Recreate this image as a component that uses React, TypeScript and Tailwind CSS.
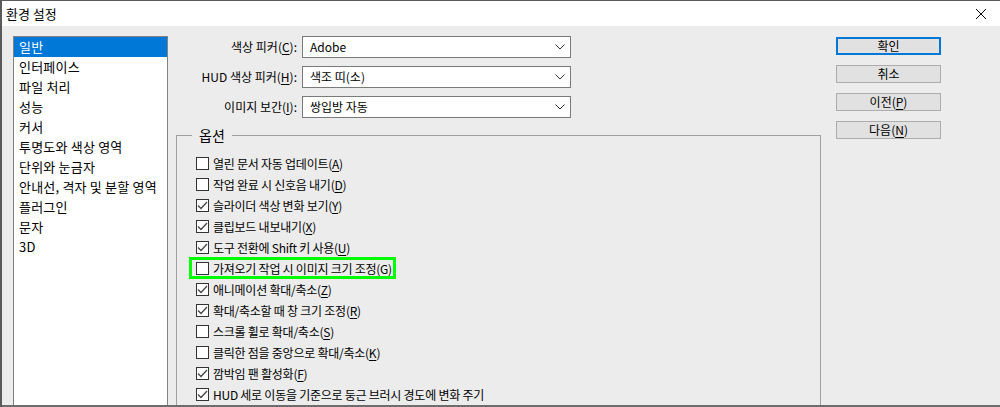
import type { ReactNode } from 'react';

const FONT = "'Noto Sans CJK KR', 'Noto Sans', sans-serif";

const categories = [
  '일반',
  '인터페이스',
  '파일 처리',
  '성능',
  '커서',
  '투명도와 색상 영역',
  '단위와 눈금자',
  '안내선, 격자 및 분할 영역',
  '플러그인',
  '문자',
  '3D',
];

const options: { pre: string; key?: string; post?: string; checked: boolean; highlight?: boolean }[] = [
  { pre: '열린 문서 자동 업데이트(', key: 'A', post: ')', checked: false },
  { pre: '작업 완료 시 신호음 내기(', key: 'D', post: ')', checked: false },
  { pre: '슬라이더 색상 변화 보기(', key: 'Y', post: ')', checked: true },
  { pre: '클립보드 내보내기(', key: 'X', post: ')', checked: true },
  { pre: '도구 전환에 Shift 키 사용(', key: 'U', post: ')', checked: true },
  { pre: '가져오기 작업 시 이미지 크기 조정(', key: 'G', post: ')', checked: false, highlight: true },
  { pre: '애니메이션 확대/축소(', key: 'Z', post: ')', checked: true },
  { pre: '확대/축소할 때 창 크기 조정(', key: 'R', post: ')', checked: true },
  { pre: '스크롤 휠로 확대/축소(', key: 'S', post: ')', checked: false },
  { pre: '클릭한 점을 중앙으로 확대/축소(', key: 'K', post: ')', checked: false },
  { pre: '깜박임 팬 활성화(', key: 'F', post: ')', checked: true },
  { pre: 'HUD 세로 이동을 기준으로 둥근 브러시 경도에 변화 주기', checked: true },
];

function Chevron() {
  return (
    <svg width="10" height="6" viewBox="0 0 10 6" className="shrink-0">
      <polyline points="0.5,0.5 5,5 9.5,0.5" fill="none" stroke="#333" strokeWidth="1" />
    </svg>
  );
}

function Select({ label, k, value }: { label: string; k: string; value: string }) {
  return (
    <div className="flex items-center h-[22px]">
      <div className="w-[126px] text-right text-[12px] pr-[5px] whitespace-nowrap">
        {label}(<u className="underline-offset-2">{k}</u>):
      </div>
      <div className="w-[269px] h-[22px] bg-white border border-[#7a7a7a] flex items-center justify-between pl-[7px] pr-[5px] text-[12px]">
        <span>{value}</span>
        <Chevron />
      </div>
    </div>
  );
}

function Checkbox({ checked }: { checked: boolean }) {
  return (
    <div className="w-[13px] h-[13px] border border-[#333] bg-white shrink-0 flex items-center justify-center">
      {checked && (
        <svg width="11" height="11" viewBox="0 0 11 11">
          <polyline points="1,5.5 4,8.5 10,2" fill="none" stroke="#444" strokeWidth="1.3" />
        </svg>
      )}
    </div>
  );
}

function Button({ children, primary }: { children: ReactNode; primary?: boolean }) {
  return (
    <div
      className={
        primary
          ? 'h-[18px] w-[105px] bg-[#e1e1e1] border-2 border-[#0078d7] flex items-center justify-center text-[12px]'
          : 'h-[18px] w-[105px] bg-[#e1e1e1] border border-[#adadad] flex items-center justify-center text-[12px]'
      }
    >
      {children}
    </div>
  );
}

export default function App() {
  return (
    <div className="w-[1000px] h-[407px] overflow-hidden bg-[#ececec] text-black flex flex-col border-l-2 border-t border-[#5a5a5a]" style={{ fontFamily: FONT }}>
      <div className="h-[25px] bg-white flex items-center justify-between pl-[4px] pr-[13px] shrink-0">
        <span className="text-[13px]">환경 설정</span>
        <svg width="12" height="12" viewBox="0 0 12 12">
          <path d="M1 1 L11 11 M11 1 L1 11" stroke="#000" strokeWidth="1" />
        </svg>
      </div>

      <div className="flex flex-1 pt-[10px] pl-[11px] min-h-0 border-b-2 border-[#6d6d6d]">
        <div className="w-[155px] bg-white border border-[#828282] border-b-0 flex flex-col shrink-0">
          {categories.map((c, i) => (
            <div
              key={c}
              className={
                i === 0
                  ? 'h-[20px] flex items-center pl-[5px] text-[13px] tracking-[0.2px] bg-[#0078d7] text-white'
                  : 'h-[20px] flex items-center pl-[5px] text-[13px] tracking-[0.2px]'
              }
            >
              {c}
            </div>
          ))}
        </div>

        <div className="ml-[8px] w-[645px] flex flex-col shrink-0">
          <div className="flex flex-col gap-[8px]">
            <Select label="색상 피커" k="C" value="Adobe" />
            <Select label="HUD 색상 피커" k="H" value="색조 띠(소)" />
            <Select label="이미지 보간" k="I" value="쌍입방 자동" />
          </div>

          <div className="relative mt-[17px] flex-1 border border-b-0 border-[#a0a0a0] pt-[17px] pl-[19px] flex flex-col">
            <span className="absolute left-[15px] -top-[11px] px-[7px] bg-[#ececec] text-[14px] leading-[20px]">옵션</span>
            {options.map((o) => (
              <div key={o.pre} className="relative h-[21px] flex items-center gap-[4px] text-[12px] tracking-[-0.25px] whitespace-nowrap">
                {o.highlight && (
                  <span className="absolute -left-[7px] -top-[1px] w-[207px] h-[22px] border-[3px] border-[#00ff00]" />
                )}
                <Checkbox checked={o.checked} />
                <span>
                  {o.pre}
                  {o.key && <u className="underline-offset-2">{o.key}</u>}
                  {o.post}
                </span>
              </div>
            ))}
          </div>
        </div>

        <div className="ml-[15px] pt-[1px] flex flex-col gap-[10px]">
          <Button primary>확인</Button>
          <Button>취소</Button>
          <Button>
            이전(<u className="underline-offset-2">P</u>)
          </Button>
          <Button>
            다음(<u className="underline-offset-2">N</u>)
          </Button>
        </div>
      </div>
    </div>
  );
}
